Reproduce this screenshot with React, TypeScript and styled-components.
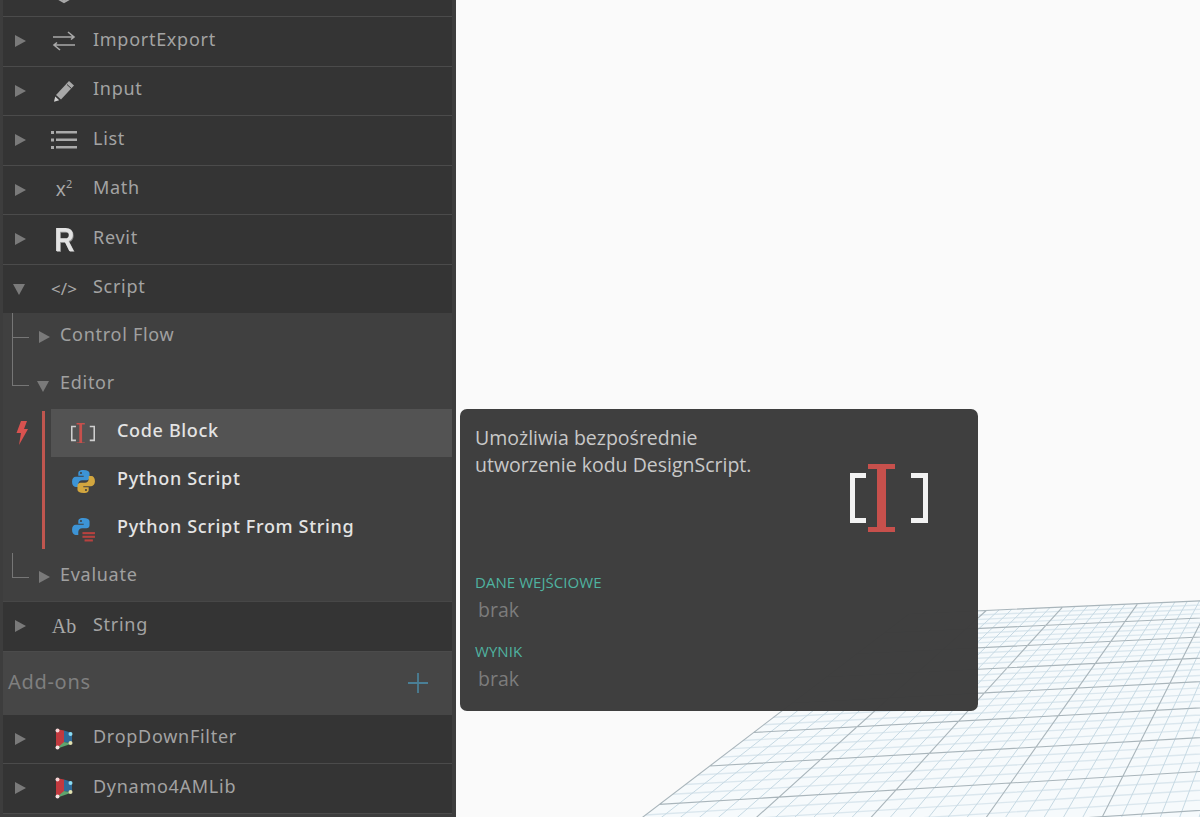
import { useMemo } from "react";
import type { ReactNode } from "react";
import styled, { createGlobalStyle } from "styled-components";

const GlobalStyle = createGlobalStyle`
    html, body {
        margin: 0;
        padding: 0;
        height: 100%;
        overflow: hidden;
        background: #fafafa;
    }
`;

const Page = styled.div`
    width: 1200px;
    height: 817px;
    display: flex;
    overflow: hidden;
    position: relative;
    font-family: "Noto Sans", sans-serif;
`;

const Sidebar = styled.div`
    width: 456px;
    height: 817px;
    flex: none;
    overflow: hidden;
    box-sizing: border-box;
    padding: 0 4px 0 3px;
    background: #3d3d3d;
`;

const Scroller = styled.div`
    margin-top: -32.5px;
`;

const Row = styled.div<{ $open?: boolean }>`
    height: ${(p) => (p.$open ? "48.5px" : "49.5px")};
    box-sizing: border-box;
    display: flex;
    align-items: center;
    padding-left: 12px;
    background: #343434;
    border-bottom: ${(p) => (p.$open ? "none" : "1px solid #4b4b4b")};
`;

const Arrow = styled.span<{ $down?: boolean }>`
    width: 0;
    height: 0;
    flex: none;
    ${(p) =>
        p.$down
            ? `border-left: 6px solid transparent;
               border-right: 6px solid transparent;
               border-top: 11px solid #7a7a7a;
               margin: 2px 1px 0 -2px;`
            : `border-top: 6.5px solid transparent;
               border-bottom: 6.5px solid transparent;
               border-left: 11px solid #7a7a7a;`}
`;

const IconSlot = styled.span`
    width: 30px;
    height: 30px;
    flex: none;
    margin-left: 23px;
    display: flex;
    align-items: center;
    justify-content: center;
    color: #b4b4b4;
`;

const RowLabel = styled.span`
    margin-left: 14px;
    margin-top: -5px;
    font-size: 18px;
    letter-spacing: 0.72px;
    color: #a3a3a3;
`;

const GlyphIcon = styled.span<{ $serif?: boolean; $size: number }>`
    font-family: ${(p) => (p.$serif ? '"Liberation Serif", serif' : '"Noto Sans", sans-serif')};
    font-size: ${(p) => p.$size}px;
    color: #a8a8a8;
    line-height: 1;
    white-space: nowrap;
    sup {
        font-size: 11px;
        line-height: 0;
        vertical-align: 8px;
    }
`;

const RevitGlyph = styled.span`
    font-family: "Liberation Sans", sans-serif;
    font-weight: 700;
    font-size: 34px;
    line-height: 1;
    color: #e2e2e2;
    transform: scaleX(0.82);
    text-shadow: 1px 1px 0 #8c8c8c;
`;

const ChildPanel = styled.div`
    background: #404040;
    height: 288px;
    border-bottom: 1px solid #474747;
`;

const Branch = styled.div<{ $reach: number }>`
    height: 48px;
    position: relative;
    display: flex;
    align-items: center;
    padding-left: 36px;

    &::before {
        content: "";
        position: absolute;
        left: 9px;
        top: ${(p) => -p.$reach}px;
        width: 16px;
        height: ${(p) => p.$reach + 24}px;
        border-left: 1px solid #767676;
        border-bottom: 1px solid #767676;
    }
`;

const BranchLabel = styled.span`
    margin-left: 10px;
    margin-top: -7px;
    font-size: 18px;
    letter-spacing: 0.72px;
    color: #a0a0a0;
`;

const LeafGroup = styled.div`
    position: relative;
    padding-left: 48px;

    &::before {
        content: "";
        position: absolute;
        left: 39px;
        top: 2px;
        bottom: 4px;
        width: 3px;
        background: #c0564f;
    }
`;

const Leaf = styled.div<{ $active?: boolean }>`
    height: 48px;
    display: flex;
    align-items: center;
    padding-left: 17px;
    background: ${(p) => (p.$active ? "#535353" : "transparent")};
`;

const LeafIcon = styled.span`
    width: 30px;
    height: 30px;
    flex: none;
    display: flex;
    align-items: center;
    justify-content: center;
`;

const LeafLabel = styled.span`
    margin-left: 19px;
    margin-top: -7px;
    font-size: 18px;
    font-weight: 500;
    letter-spacing: 0.66px;
    color: #e4e4e4;
`;

const Bolt = styled.svg`
    position: absolute;
    left: 12px;
    top: 11px;
`;

const AddonsHeader = styled.div`
    height: 63px;
    box-sizing: border-box;
    display: flex;
    align-items: center;
    justify-content: space-between;
    padding: 0 23px 0 5px;
    background: #464646;
`;

const AddonsLabel = styled.span`
    margin-top: -3px;
    font-size: 20px;
    letter-spacing: 0.7px;
    color: #7f7f7f;
`;

const Viewport = styled.div`
    flex: 1;
    position: relative;
    background: #fafafa;
`;

const GridSvg = styled.svg`
    position: absolute;
    left: 0;
    top: 0;
`;

const Tooltip = styled.div`
    position: absolute;
    left: 460px;
    top: 409px;
    width: 518px;
    height: 302px;
    box-sizing: border-box;
    padding: 15px 15px 0;
    border-radius: 7px;
    background: rgba(60, 60, 60, 0.985);
    font-family: "Open Sans", sans-serif;
    display: flex;
    flex-direction: column;
`;

const TipTop = styled.div`
    display: flex;
    justify-content: space-between;
    height: 148px;
`;

const TipText = styled.div`
    font-size: 19.5px;
    line-height: 27px;
    color: #c8c8c8;
`;

const TipIconBox = styled.div`
    margin: 40px 35px 0 0;
    flex: none;
`;

const SectionTitle = styled.div<{ $gap: number }>`
    margin-top: ${(p) => p.$gap}px;
    font-size: 15px;
    line-height: 20px;
    color: #4fb3a0;
    letter-spacing: 0.05px;
`;

const SectionValue = styled.div`
    margin: 6px 0 0 3px;
    font-size: 19.5px;
    line-height: 24px;
    color: #7c7c7c;
`;

const BlurredSvg = styled.svg`
    filter: blur(0.5px);
`;

const ImportExportIcon = () => (
    <svg width="24" height="20" viewBox="0 0 24 20" fill="none" stroke="#a8a8a8" strokeWidth="1.6">
        <path d="M1 6h21M16 1l6 5-3 2.500" />
        <path d="M23 14H2M8 19l-6-5 3-2.500" />
    </svg>
);

const PencilIcon = () => (
    <svg width="24" height="24" viewBox="0 0 24 24">
        <path d="M17 2l5 4.500L9 20.500 4 16z" fill="#a8a8a8" />
        <path d="M3.200 17.500l4 3.800-5.200 1.500z" fill="#d0d0d0" />
        <path d="M15 5.500l4.400 4" stroke="#343434" strokeWidth="1" />
    </svg>
);

const ListIcon = () => (
    <svg width="26" height="20" viewBox="0 0 26 20" fill="#aaaaaa">
        <rect x="0" y="1" width="3" height="3" />
        <rect x="0" y="8.500" width="3" height="3" />
        <rect x="0" y="16" width="3" height="3" />
        <rect x="5" y="1" width="21" height="2.500" />
        <rect x="5" y="8.500" width="21" height="2.500" />
        <rect x="5" y="16" width="21" height="2.500" />
    </svg>
);

const PythonIcon = ({ withLines }: { withLines?: boolean }) => (
    <svg width="25" height="25" viewBox="0 0 24 24">
        <path
            d="M11.800 1C7.800 1 7 2.700 7 4.200V6.500h5.200v1H4.600C2.600 7.500 1 9.200 1 12.200c0 3.100 1.500 5 3.400 5H7v-2.800c0-2 1.700-3.600 3.700-3.600h4.200c1.600 0 2.900-1.300 2.900-2.900V4.200C17.800 2.400 15.800 1 11.800 1z"
            fill="#3d94d6"
        />
        <circle cx="9.600" cy="3.900" r="1" fill="#404040" />
        {withLines ? (
            <g fill="#b8423f">
                <rect x="11" y="14.500" width="12" height="2" />
                <rect x="11" y="18" width="12" height="2" />
                <rect x="13" y="21.500" width="8" height="2" />
            </g>
        ) : (
            <>
                <path
                    d="M12.200 23c4 0 4.800-1.700 4.800-3.200v-2.300h-5.200v-1h7.600c2 0 3.600-1.700 3.600-4.700 0-3.100-1.500-5-3.400-5H17v2.800c0 2-1.700 3.600-3.700 3.600H9.100c-1.600 0-2.900 1.300-2.900 2.900v3.700C6.200 21.600 8.200 23 12.200 23z"
                    fill="#d2a63f"
                />
                <circle cx="14.400" cy="20.100" r="1" fill="#404040" />
            </>
        )}
    </svg>
);

const PackageIcon = () => (
    <BlurredSvg width="20" height="24" viewBox="0 0 20 24">
        <path d="M2 2l8 1.500V17l-8 5z" fill="#c23a3f" />
        <path d="M10 3.500L18 6v10.500L10 15z" fill="#2f6a98" />
        <path d="M2 22l8-7 8 1.500z" fill="#5fa56e" />
        <circle cx="3.500" cy="3.500" r="2" fill="#f6d4d4" />
        <circle cx="16.500" cy="7" r="2" fill="#8adcf4" />
        <circle cx="3.500" cy="20.500" r="2" fill="#f6e4e4" />
        <circle cx="16.500" cy="16" r="2" fill="#e0e0b0" />
    </BlurredSvg>
);

const CubeIcon = () => (
    <svg width="24" height="24" viewBox="0 0 24 24" fill="none" stroke="#a8a8a8" strokeWidth="2">
        <path d="M12 2l9 5v10l-9 5-9-5V7z" />
        <path d="M3 7l9 5 9-5M12 12v10" />
    </svg>
);

const CodeBlockIcon = ({ size, bracket }: { size: number; bracket: string }) => (
    <svg width={size} height={(size * 68) / 78} viewBox="0 0 78 68" fill="none">
        <path d="M16 11.500H2.500v45H16" stroke={bracket} strokeWidth="5" />
        <path d="M61 11.500h14.500v45H61" stroke={bracket} strokeWidth="5" />
        <path d="M18 2.500h27M18 65.500h27" stroke="#c7504c" strokeWidth="5" />
        <rect x="27" y="2" width="9" height="64" fill="#c7504c" />
    </svg>
);

const COLS = 5;
const ROWS = 8;
// corners of the first 5x8 major cells of the ground plane, read off the picture
const QUAD = [909, 614, 1285, 597, 1221, 809, 601, 849];

function project(u: number, v: number): [number, number] {
    const [x0, y0, x1, y1, x2, y2, x3, y3] = QUAD;
    const dx1 = x1 - x2;
    const dx2 = x3 - x2;
    const dx3 = x0 - x1 + x2 - x3;
    const dy1 = y1 - y2;
    const dy2 = y3 - y2;
    const dy3 = y0 - y1 + y2 - y3;
    const den = dx1 * dy2 - dx2 * dy1;
    const g = (dx3 * dy2 - dx2 * dy3) / den;
    const h = (dx1 * dy3 - dx3 * dy1) / den;
    const a = x1 - x0 + g * x1;
    const b = x3 - x0 + h * x3;
    const d = y1 - y0 + g * y1;
    const e = y3 - y0 + h * y3;
    const w = g * u + h * v + 1;
    return [(a * u + b * v + x0) / w, (d * u + e * v + y0) / w];
}

const lastCol = COLS + 2;
const lastRow = ROWS + 2;

const segment = (a: [number, number], b: [number, number]) => `M${a[0]} ${a[1]}L${b[0]} ${b[1]}`;

function depthLines(perCell: number, skipMajor: boolean) {
    const parts: string[] = [];
    for (let i = 0; i <= lastCol * perCell; i++) {
        if (skipMajor && i % perCell === 0) continue;
        const u = i / perCell / COLS;
        parts.push(segment(project(u, 0), project(u, lastRow / ROWS)));
    }
    return parts.join("");
}

function crossLines(perCell: number, skipMajor: boolean) {
    const parts: string[] = [];
    for (let i = 0; i <= lastRow * perCell; i++) {
        if (skipMajor && i % perCell === 0) continue;
        const v = i / perCell / ROWS;
        parts.push(segment(project(0, v), project(lastCol / COLS, v)));
    }
    return parts.join("");
}

function GroundGrid() {
    const minorDepth = useMemo(() => depthLines(6, true), []);
    const minorCross = useMemo(() => crossLines(4, true), []);
    const major = useMemo(() => depthLines(1, false) + crossLines(1, false), []);
    const plane = useMemo(() => {
        const c = [
            project(0, 0),
            project(lastCol / COLS, 0),
            project(lastCol / COLS, lastRow / ROWS),
            project(0, lastRow / ROWS),
        ];
        return c.map((p) => p.join(",")).join(" ");
    }, []);
    return (
        <GridSvg width="744" height="817" viewBox="456 0 744 817">
            <polygon points={plane} fill="#f6fafc" />
            <path d={minorCross} stroke="#dbe7ee" strokeWidth="1.4" fill="none" />
            <path d={minorDepth} stroke="#c6d9e3" strokeWidth="1" fill="none" />
            <path d={major} stroke="#a9b5bb" strokeWidth="1.1" fill="none" />
        </GridSvg>
    );
}

type Category = { name: string; icon: ReactNode };

const topRows: Category[] = [
    { name: "Geometry", icon: <CubeIcon /> },
    { name: "ImportExport", icon: <ImportExportIcon /> },
    { name: "Input", icon: <PencilIcon /> },
    { name: "List", icon: <ListIcon /> },
    { name: "Math", icon: <GlyphIcon $size={19}>x<sup>2</sup></GlyphIcon> },
    { name: "Revit", icon: <RevitGlyph>R</RevitGlyph> },
];

function App() {
    return (
        <Page>
            <GlobalStyle />
            <Sidebar>
                <Scroller>
                    {topRows.map((c) => (
                        <Row key={c.name}>
                            <Arrow />
                            <IconSlot>{c.icon}</IconSlot>
                            <RowLabel>{c.name}</RowLabel>
                        </Row>
                    ))}
                    <Row $open>
                        <Arrow $down />
                        <IconSlot>
                            <GlyphIcon $size={17}>&lt;/&gt;</GlyphIcon>
                        </IconSlot>
                        <RowLabel>Script</RowLabel>
                    </Row>
                    <ChildPanel>
                        <Branch $reach={0}>
                            <Arrow />
                            <BranchLabel>Control Flow</BranchLabel>
                        </Branch>
                        <Branch $reach={24}>
                            <Arrow $down />
                            <BranchLabel>Editor</BranchLabel>
                        </Branch>
                        <LeafGroup>
                            <Bolt width="14" height="26" viewBox="0 0 14 26">
                                <path d="M6 1h6L9 9h4L4 25l2-12H1.500z" fill="#d9524f" />
                            </Bolt>
                            <Leaf $active>
                                <LeafIcon>
                                    <CodeBlockIcon size={24} bracket="#cfcfcf" />
                                </LeafIcon>
                                <LeafLabel>Code Block</LeafLabel>
                            </Leaf>
                            <Leaf>
                                <LeafIcon>
                                    <PythonIcon />
                                </LeafIcon>
                                <LeafLabel>Python Script</LeafLabel>
                            </Leaf>
                            <Leaf>
                                <LeafIcon>
                                    <PythonIcon withLines />
                                </LeafIcon>
                                <LeafLabel>Python Script From String</LeafLabel>
                            </Leaf>
                        </LeafGroup>
                        <Branch $reach={0}>
                            <Arrow />
                            <BranchLabel>Evaluate</BranchLabel>
                        </Branch>
                    </ChildPanel>
                    <Row>
                        <Arrow />
                        <IconSlot>
                            <GlyphIcon $serif $size={20}>Ab</GlyphIcon>
                        </IconSlot>
                        <RowLabel>String</RowLabel>
                    </Row>
                    <AddonsHeader>
                        <AddonsLabel>Add-ons</AddonsLabel>
                        <svg width="22" height="22" viewBox="0 0 22 22" stroke="#4a7f96" strokeWidth="1.8">
                            <path d="M11 1v20M1 11h20" />
                        </svg>
                    </AddonsHeader>
                    <Row>
                        <Arrow />
                        <IconSlot>
                            <PackageIcon />
                        </IconSlot>
                        <RowLabel>DropDownFilter</RowLabel>
                    </Row>
                    <Row>
                        <Arrow />
                        <IconSlot>
                            <PackageIcon />
                        </IconSlot>
                        <RowLabel>Dynamo4AMLib</RowLabel>
                    </Row>
                </Scroller>
            </Sidebar>
            <Viewport>
                <GroundGrid />
            </Viewport>
            <Tooltip>
                <TipTop>
                    <TipText>
                        Umożliwia bezpośrednie
                        <br />
                        utworzenie kodu DesignScript.
                    </TipText>
                    <TipIconBox>
                        <CodeBlockIcon size={78} bracket="#f2f2f2" />
                    </TipIconBox>
                </TipTop>
                <SectionTitle $gap={0}>DANE WEJŚCIOWE</SectionTitle>
                <SectionValue>brak</SectionValue>
                <SectionTitle $gap={19}>WYNIK</SectionTitle>
                <SectionValue>brak</SectionValue>
            </Tooltip>
        </Page>
    );
}

export default App;
